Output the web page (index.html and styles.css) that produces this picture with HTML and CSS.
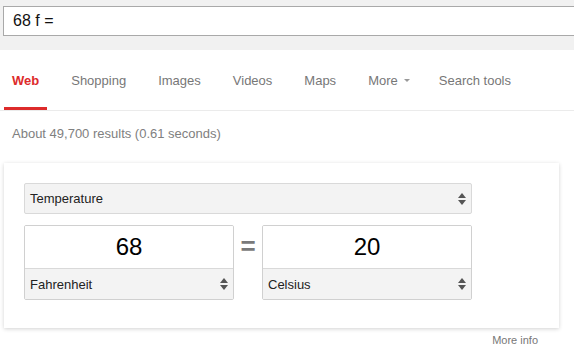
FILE: index.html
```html
<!DOCTYPE html>
<html lang="en">
<head>
    <meta charset="UTF-8">
    <meta name="viewport" content="width=device-width, initial-scale=1.0">
    <title>68 f =</title>
    <link rel="stylesheet" href="styles.css">
</head>
<body>
    <div class="top">
        <div class="searchbox">68 f =</div>
    </div>
    <div class="tabs">
        <span class="tab active">Web</span>
        <span class="tab">Shopping</span>
        <span class="tab">Images</span>
        <span class="tab">Videos</span>
        <span class="tab">Maps</span>
        <span class="tab">More <span class="caret"></span></span>
        <span class="tab tools">Search tools</span>
    </div>
    <div class="stats">About 49,700 results (0.61 seconds)</div>
    <div class="card">
        <div class="sel kind">
            <span>Temperature</span>
            <svg class="spin" width="8" height="12" viewBox="0 0 8 12"><polygon points="0,5 4,0 8,5"/><polygon points="0,7 4,12 8,7"/></svg>
        </div>
        <div class="conv">
            <div class="unit">
                <div class="val">68</div>
                <div class="sel">
                    <span>Fahrenheit</span>
                    <svg class="spin" width="8" height="12" viewBox="0 0 8 12"><polygon points="0,5 4,0 8,5"/><polygon points="0,7 4,12 8,7"/></svg>
                </div>
            </div>
            <div class="eq">=</div>
            <div class="unit">
                <div class="val">20</div>
                <div class="sel">
                    <span>Celsius</span>
                    <svg class="spin" width="8" height="12" viewBox="0 0 8 12"><polygon points="0,5 4,0 8,5"/><polygon points="0,7 4,12 8,7"/></svg>
                </div>
            </div>
        </div>
    </div>
    <div class="more">More info</div>
</body>
</html>
```

FILE: styles.css
```css
body {margin: 0; font-family: "Liberation Sans", Arial, sans-serif; color: #222; background: #fff;}

.top {height: 50px; background: #f1f1f1; padding: 6px 0 0 3px; box-sizing: border-box; overflow: hidden;}
.searchbox {height: 28px; width: 600px; background: #fff; border: 1px solid #a9a9a9; padding-left: 9px; font-size: 16px; line-height: 28px; color: #111;}

.tabs {display: flex; height: 60px; border-bottom: 1px solid #ebebeb; padding-left: 4px;}
.tab {display: flex; align-items: center; padding: 3px 8px 0; margin-right: 16px; font-size: 13px; color: #777; border-bottom: 3px solid transparent;}
.tab.active {color: #dd2b2b; font-weight: bold; border-bottom-color: #dd2b2b;}
.tab.tools {margin-left: -3px;}
.caret {display: inline-block; margin-left: 6px; border-left: 3px solid transparent; border-right: 3px solid transparent; border-top: 3px solid #999;}

.stats {padding: 15px 0 0 12px; font-size: 13px; line-height: 15px; color: #808080;}

.card {margin: 22px 0 0 4px; width: 555px; box-sizing: border-box; padding: 20px 87px 28px 20px; background: #fff; box-shadow: 0 1px 4px rgba(0,0,0,0.18);}
.sel {display: flex; align-items: center; justify-content: space-between; height: 30px; padding: 0 5px 0 5px; background: #f3f3f3; font-size: 13px; color: #222;}
.sel.kind {height: 29px; border: 1px solid #d9d9d9; border-radius: 2px;}
.spin {fill: #555;}

.conv {display: flex; margin-top: 11px;}
.unit {width: 210px; box-sizing: border-box; border: 1px solid #d0d0d0; border-radius: 2px; overflow: hidden;}
.val {height: 42px; line-height: 42px; text-align: center; font-size: 24px; color: #000; border-bottom: 1px solid #d9d9d9; background: #fff;}
.eq {width: 28px; text-align: center; font-size: 26px; font-weight: bold; line-height: 42px; color: #7a7a7a;}

.more {width: 538px; margin-top: 6px; text-align: right; font-size: 11px; line-height: 13px; color: #777;}
```
